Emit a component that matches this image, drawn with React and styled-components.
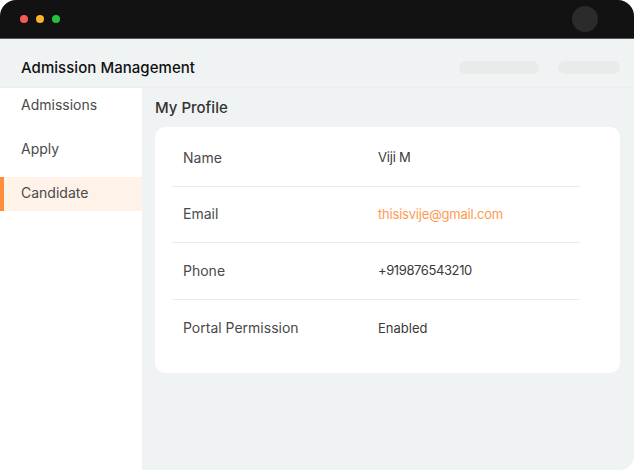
import React from 'react';
import styled, { createGlobalStyle } from 'styled-components';

const Global = createGlobalStyle`
  html, body { margin: 0; padding: 0; background: #fff; }
  body { font-family: Inter, "Noto Sans", "Liberation Sans", sans-serif; }
`;
const Frame = styled.div`
  width: 634px; height: 470px; display: flex; flex-direction: column;
  border-radius: 16px 16px 14px 0; overflow: hidden; background: #fff;
`;
const TitleBar = styled.div`
  height: 39px; flex: none; box-sizing: border-box; background: #121212; border-bottom: 1px solid #55575a;
  display: flex; align-items: center; padding: 0 36px 0 20px; gap: 8px;
`;
const Dot = styled.span`
  width: 8px; height: 8px; border-radius: 50%; background: ${p => p.$c};
`;
const Avatar = styled.span`
  width: 26px; height: 26px; border-radius: 50%; background: #2b2b2b; margin-left: auto;
`;
const Header = styled.header`
  height: 49px; flex: none; box-sizing: border-box; background: #f0f3f4; border-bottom: 1px solid #ebeeef;
  display: flex; align-items: center; padding: 9px 14px 0 21px;
`;
const AppName = styled.h1`
  margin: 0 auto 0 0; font-size: 15px; font-weight: 500; color: #111; letter-spacing: 0.05px;
`;
const Pill = styled.span`
  width: ${p => p.$w}px; height: 13px; margin-left: ${p => p.$gap}px; border-radius: 7px; background: #e9ebeb;
`;
const Body = styled.div`
  flex: 1; display: flex; min-height: 0;
`;
const Sidebar = styled.nav`
  width: 142px; flex: none; background: #fff; display: flex; flex-direction: column; padding-top: 1px;
`;
const NavItem = styled.div`
  height: 34px; margin-bottom: 10px; box-sizing: border-box; display: flex; align-items: center;
  padding-left: ${p => p.$active ? 17 : 21}px; padding-bottom: 4px; font-size: 14px; color: #4a4a4a;
  background: ${p => p.$active ? '#fef2e9' : 'transparent'};
  border-left: ${p => p.$active ? '4px solid #ff8c3d' : 'none'};
`;
const Main = styled.main`
  flex: 1; background: #f0f3f4; padding: 10px 14px 0 13px;
`;
const Heading = styled.h2`
  margin: 0 0 9px; font-size: 15px; line-height: 20px; font-weight: 500; color: #333;
`;
const Card = styled.section`
  height: 246px; box-sizing: border-box; background: #fff; border-radius: 10px;
  padding: 3px 40px 0 17px;
`;
const Row = styled.div`
  height: 56.6px; box-sizing: border-box; display: flex; align-items: center; padding: 0 0 1px 11px;
  border-bottom: ${p => p.$last ? 'none' : '1px solid #eaecec'};
`;
const Label = styled.span`
  width: 195px; font-size: 14px; color: #4a4a4a;
`;
const Value = styled.span`
  font-size: 13px; letter-spacing: ${p => p.$track}px; color: ${p => p.$accent ? '#ff9a52' : '#3a3a3a'};
`;

const rows = [
  { label: 'Name', value: 'Viji M', track: -0.2 },
  { label: 'Email', value: 'thisisvije@gmail.com', track: -0.2, accent: true },
  { label: 'Phone', value: '+919876543210', track: -0.4 },
  { label: 'Portal Permission', value: 'Enabled', track: 0 },
];

export default function App() {
  return (
    <>
      <Global />
      <Frame>
        <TitleBar>
          <Dot $c="#f65a57" />
          <Dot $c="#fbb32c" />
          <Dot $c="#25c13d" />
          <Avatar />
        </TitleBar>
        <Header>
          <AppName>Admission Management</AppName>
          <Pill $w={80} />
          <Pill $w={62} $gap={19} />
        </Header>
        <Body>
          <Sidebar>
            <NavItem>Admissions</NavItem>
            <NavItem>Apply</NavItem>
            <NavItem $active>Candidate</NavItem>
          </Sidebar>
          <Main>
            <Heading>My Profile</Heading>
            <Card>
              {rows.map((r, i) => (
                <Row key={r.label} $last={i === rows.length - 1}>
                  <Label>{r.label}</Label>
                  <Value $accent={r.accent} $track={r.track}>{r.value}</Value>
                </Row>
              ))}
            </Card>
          </Main>
        </Body>
      </Frame>
    </>
  );
}
